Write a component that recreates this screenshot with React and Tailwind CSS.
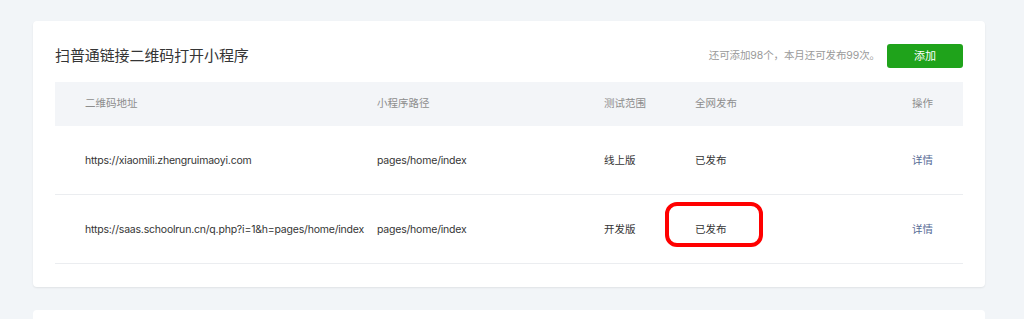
export default function App() {
  const font = { fontFamily: 'Inter, "Noto Sans CJK SC", "Noto Sans", sans-serif' };
  const rows = [
    { url: "https://xiaomili.zhengruimaoyi.com", path: "pages/home/index", range: "线上版", pub: "已发布", mark: false },
    { url: "https://saas.schoolrun.cn/q.php?i=1&h=pages/home/index", path: "pages/home/index", range: "开发版", pub: "已发布", mark: true },
  ];
  return (
    <div className="min-h-[319px] h-[319px] overflow-hidden bg-[#f2f5f8] pt-[21px]" style={font}>
      <div className="ml-[33px] w-[952px] rounded-[4px] bg-white shadow-[0_1px_2px_rgba(0,0,0,0.08)] px-[22px] pt-[23px] pb-[23px]">
        <div className="flex items-center justify-between h-[24px]">
          <div className="text-[15px] text-[#353535] leading-[24px] tracking-[-0.1px]">扫普通链接二维码打开小程序</div>
          <div className="flex items-center">
            <span className="text-[10.5px] text-[#9a9a9a] mr-[7px] tracking-[-0.1px]">还可添加98个，本月还可发布99次。</span>
            <button className="w-[76px] h-[24px] rounded-[3px] bg-[#1fa31b] text-white text-[11px]">添加</button>
          </div>
        </div>
        <div className="mt-[14px]">
          <div className="grid grid-cols-[322px_227px_91px_217px_51px] h-[44px] items-center bg-[#f3f5f8] text-[10.5px] text-[#8d8d8d]">
            <div className="pl-[30px]">二维码地址</div>
            <div>小程序路径</div>
            <div>测试范围</div>
            <div>全网发布</div>
            <div>操作</div>
          </div>
          {rows.map((r, i) => (
            <div key={i} className="grid grid-cols-[322px_227px_91px_217px_51px] h-[69px] items-center border-b border-[#ebedf0] text-[10.5px] text-[#353535]">
              <div className="pl-[30px] whitespace-nowrap tracking-[-0.2px] pt-[2px]">{r.url}</div>
              <div className="tracking-[-0.2px] pt-[2px]">{r.path}</div>
              <div className="pt-[2px]">{r.range}</div>
              <div className="relative pt-[2px]">
                {r.pub}
                {r.mark && (
                  <div className="absolute left-[-30px] top-[-18px] w-[98px] h-[45px] rounded-[12px] border-[4px] border-[#ff0000]"></div>
                )}
              </div>
              <div className="text-[#576b95] pt-[2px]">详情</div>
            </div>
          ))}
        </div>
      </div>
      <div className="ml-[33px] w-[952px] mt-[23px] h-[40px] rounded-[4px] bg-white"></div>
    </div>
  );
}
